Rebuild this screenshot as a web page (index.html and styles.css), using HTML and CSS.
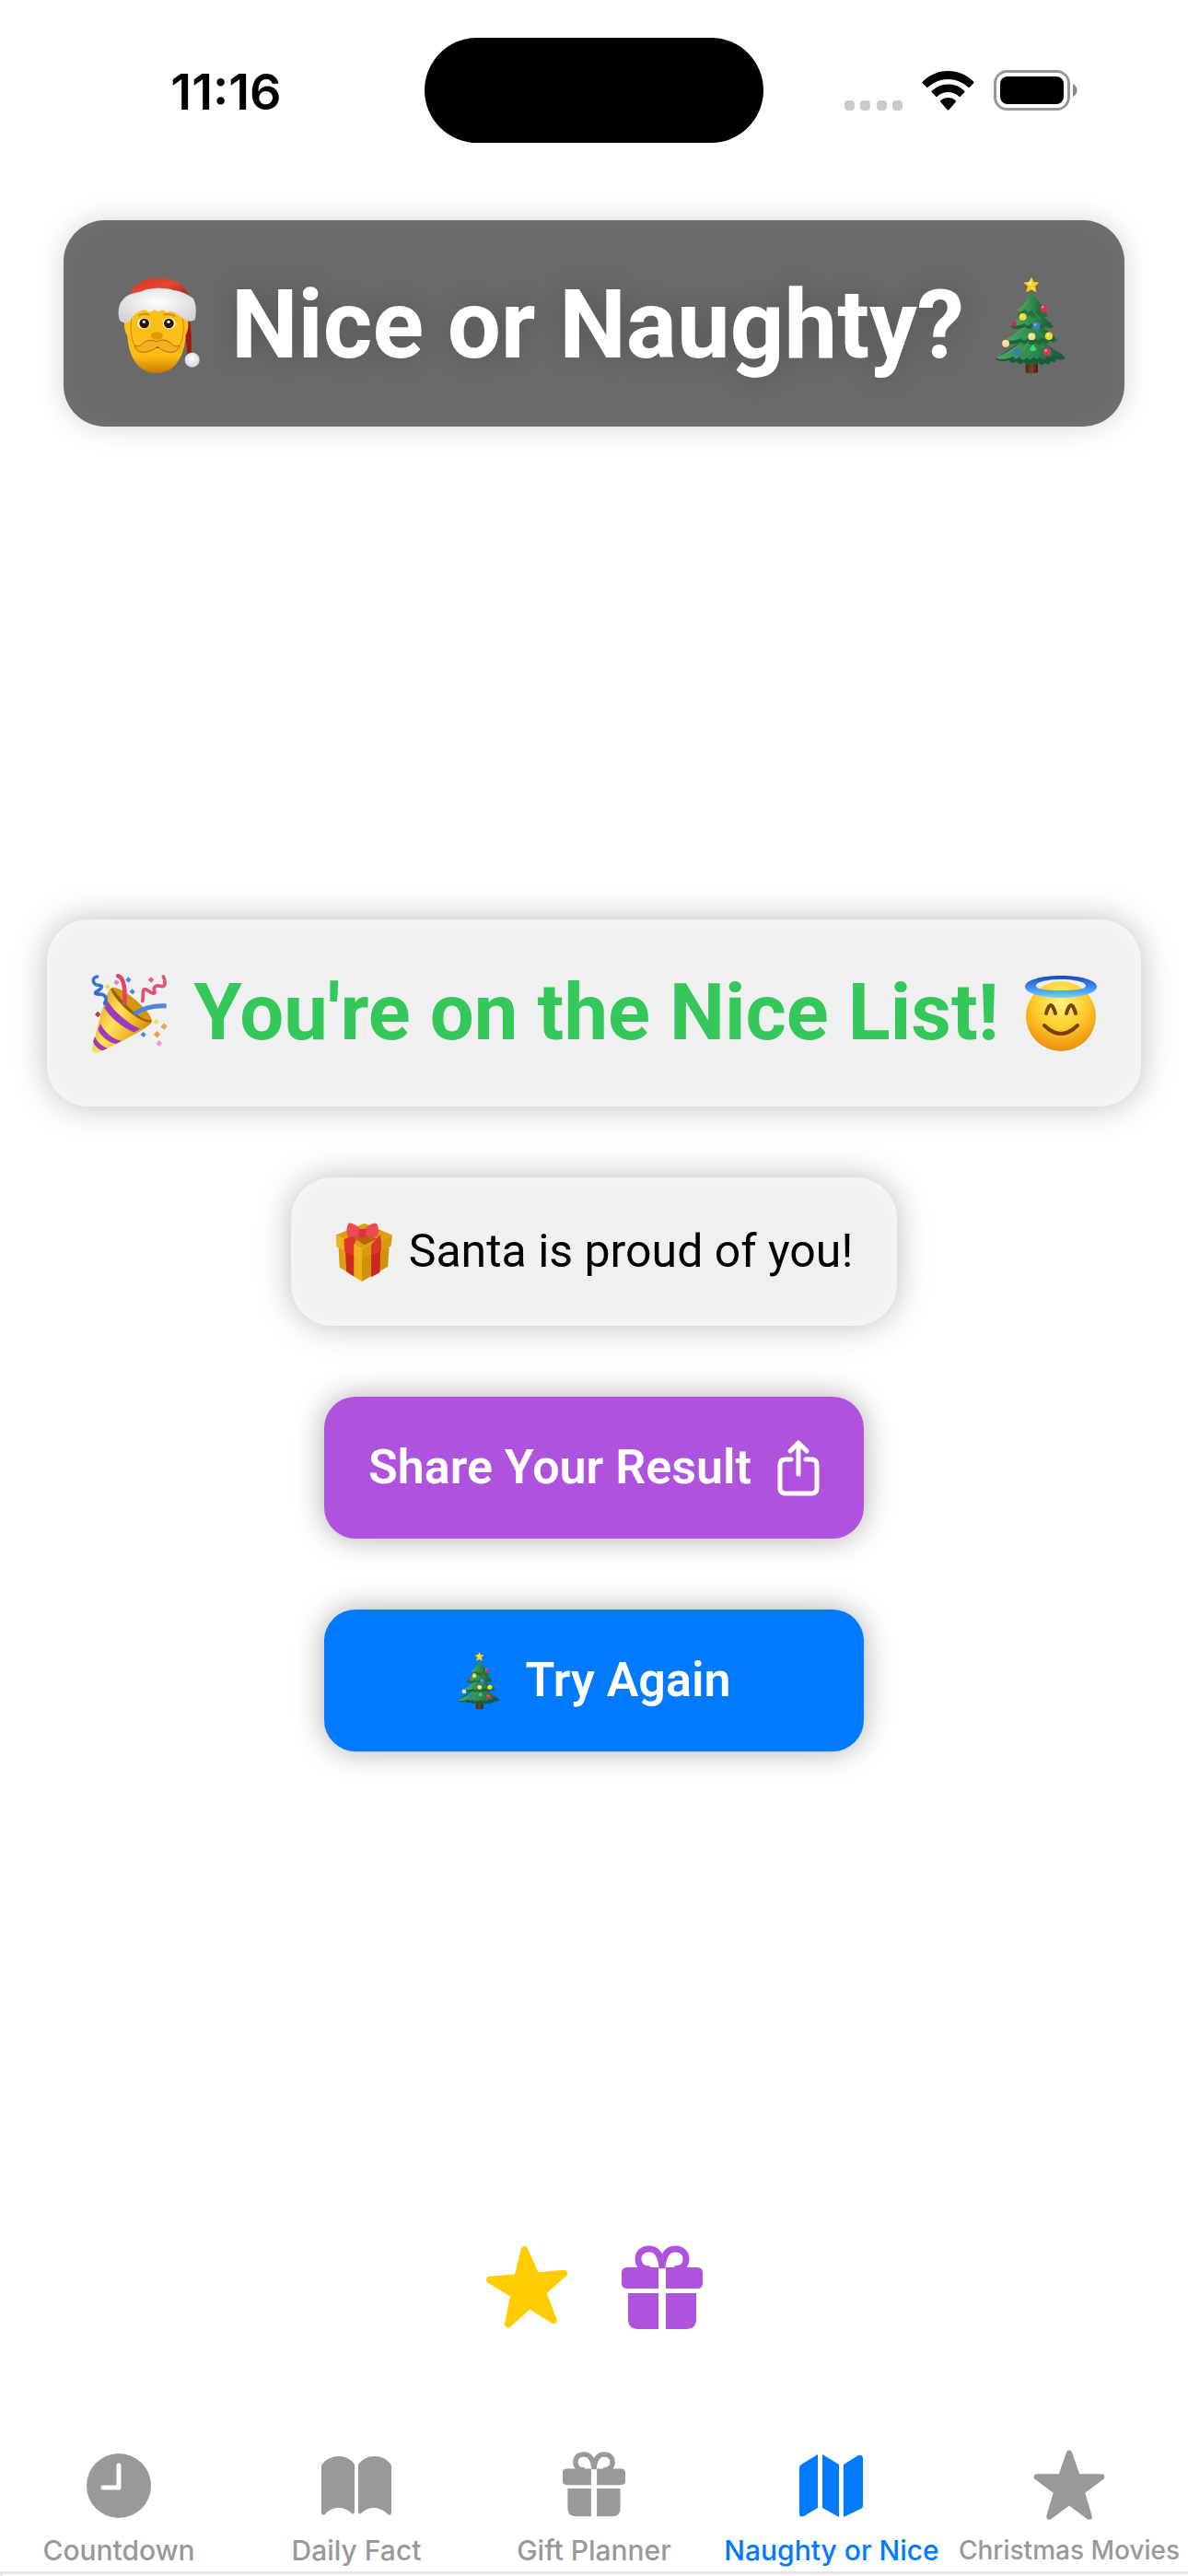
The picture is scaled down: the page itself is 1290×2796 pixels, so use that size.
FILE: index.html
```html
<!DOCTYPE html>
<html lang="en">
<head>
<meta charset="utf-8">
<meta name="viewport" content="width=device-width, initial-scale=1">
<title>Nice or Naughty?</title>
<link rel="stylesheet" href="styles.css">
</head>
<body>
<svg class="defs" aria-hidden="true">
  <defs>
    <linearGradient id="leaf" x1="0" x2="1"><stop offset="0" stop-color="#47a862"/><stop offset=".55" stop-color="#2f8a4c"/><stop offset="1" stop-color="#175a38"/></linearGradient>
    <linearGradient id="bark" x1="0" x2="1"><stop offset="0" stop-color="#4a2413"/><stop offset=".5" stop-color="#7a4324"/><stop offset="1" stop-color="#3f1d10"/></linearGradient>
    <linearGradient id="skin" x1="0" y1="0" x2="0" y2="1"><stop offset="0" stop-color="#fbc11f"/><stop offset=".75" stop-color="#fcbd13"/><stop offset="1" stop-color="#c97a02"/></linearGradient>
    <linearGradient id="hat" x1="0" y1="0" x2="1" y2="1"><stop offset="0" stop-color="#d8301f"/><stop offset=".5" stop-color="#e04a35"/><stop offset="1" stop-color="#a81b12"/></linearGradient>
    <radialGradient id="fur" cx=".5" cy=".4" r=".7"><stop offset="0" stop-color="#fff"/><stop offset="1" stop-color="#cfcfd4"/></radialGradient>
    <radialGradient id="face" cx=".5" cy=".3" r=".7"><stop offset="0" stop-color="#fff27c"/><stop offset=".5" stop-color="#fdd02e"/><stop offset="1" stop-color="#ee8d0c"/></radialGradient>
    <linearGradient id="halo" x1="0" y1="0" x2="0" y2="1"><stop offset="0" stop-color="#1746c0"/><stop offset=".5" stop-color="#3c88ec"/><stop offset="1" stop-color="#72d0ff"/></linearGradient>
    <linearGradient id="cone" x1="0" y1=".2" x2="1" y2=".8"><stop offset="0" stop-color="#d99a12"/><stop offset=".4" stop-color="#ffe15a"/><stop offset=".7" stop-color="#edb21f"/><stop offset="1" stop-color="#b97309"/></linearGradient>
    <linearGradient id="boxl" x1="0" x2="1"><stop offset="0" stop-color="#d99a0c"/><stop offset="1" stop-color="#edb51c"/></linearGradient>

    <symbol id="tree" viewBox="88 50 228 328">
      <path fill="url(#bark)" d="M186 325h40v42q-20 6-40 0z"/>
      <path fill="#1a5c39" d="M206 240c30 20 70 50 110 78-8 10-24 8-32 4 4 10-6 14-18 8 4 12-8 14-20 4 0 12-10 10-18 0-6 10-18 12-24 2-10 10-20 6-22-4-12 10-22 8-24-2-12 8-24 6-24-4-14 6-44 6-46-6 40-26 78-50 118-80z"/>
      <path fill="url(#leaf)" d="M206 235c26 24 60 52 102 74-8 10-22 6-32 0 0 10-10 10-22 4 2 14-12 12-22 2-2 12-14 10-20 0-6 12-16 12-22 2-8 12-20 10-22-2-12 10-22 8-22-2-16 12-54 14-56 4 50-20 84-50 116-82z"/>
      <path fill="#1d663e" d="M206 190c22 28 52 50 84 70-6 10-20 8-28 4 0 12-14 10-22 2-4 12-16 12-22 2-8 12-20 10-24 0-10 10-20 8-22-2-14 10-46 12-50 0 36-20 58-44 84-76z"/>
      <path fill="url(#leaf)" d="M206 180c22 28 46 48 76 70-6 8-18 6-26 0 0 12-12 10-20 2-4 12-14 12-20 2-8 12-18 10-22 0-8 12-20 10-22 0-14 10-44 12-48 2 36-18 58-44 82-76z"/>
      <path fill="#1d663e" d="M206 140c18 30 42 54 72 76-8 8-20 6-28 0-2 10-14 8-20 0-8 12-16 12-22 2-8 10-18 8-22-2-14 10-46 12-50 0 32-20 50-44 70-76z"/>
      <path fill="url(#leaf)" d="M206 130c18 28 36 54 64 78-8 6-18 4-26-2-2 10-12 8-18 0-6 12-16 12-22 0-8 12-18 8-22 0-12 8-38 12-42 2 28-18 48-46 66-78z"/>
      <path fill="#22713f" d="M206 112c14 22 32 46 54 70-8 6-16 4-24-2-4 10-12 8-18 0-6 12-14 10-18 0-12 8-36 10-40 0 20-16 34-40 46-68z"/>
      <path fill="url(#leaf)" d="M206 100c10 22 26 42 44 60-8 8-18 8-24 0-6 10-16 12-20 2-8 10-16 8-20-2-10 8-24 8-28 2 22-14 36-36 48-62z"/>
      <g stroke="#66bd7d" stroke-width="3" opacity=".5" fill="none" stroke-linecap="round"><path d="M196 130l-18 24M216 170l18 24M190 172l-22 24M180 222l-30 22M220 230l26 24M196 264l-18 28M160 280l-36 24M238 280l32 30"/></g>
      <path fill="#f9cd20" stroke="#f9cd20" stroke-width="4" stroke-linejoin="round" d="M205 59l6 14 15 1-11 11 4 17-14-8-15 8 5-17-12-11 15-1z"/>
      <path fill="#fff09a" d="M205 66v18l-14-8zM205 84l8 12-8-4z"/>
      <circle cx="246" cy="158" r="12" fill="#d92e50"/><circle cx="177" cy="185" r="12" fill="#f2dc35"/><circle cx="149" cy="207" r="8" fill="#c72e4a"/><circle cx="221" cy="215" r="12" fill="#3f7fce"/><circle cx="206" cy="249" r="12" fill="#efe285"/><circle cx="262" cy="248" r="13" fill="#efdb32"/><circle cx="121" cy="272" r="12" fill="#f2e08b"/><path fill="#44d475" d="M210 274l12 18q-12 10-24 0z"/><circle cx="158" cy="301" r="11" fill="#397ac6"/><circle cx="256" cy="299" r="13" fill="#d83554"/>
      <g fill="#fff" opacity=".45"><circle cx="242" cy="153" r="4"/><circle cx="173" cy="181" r="4"/><circle cx="217" cy="211" r="4"/><circle cx="202" cy="245" r="4"/><circle cx="258" cy="244" r="4"/><circle cx="117" cy="268" r="4"/><circle cx="252" cy="295" r="4"/></g>
    </symbol>

    <symbol id="gift" viewBox="0 0 88 91">
      <g fill="none" stroke="currentColor" stroke-width="7"><path d="M44 25C43 11 38 4 30 4 22 4 18 9 18 15c0 7 5 11 13 11M44 25C45 11 50 4 58 4c8 0 12 5 12 11 0 7-5 11-13 11"/></g>
      <path fill="currentColor" d="M6 24h34v23H6q-6 0-6-6V30q0-6 6-6zM48 24h34q6 0 6 6v11q0 6-6 6H48zM7 52h33v39H18Q7 91 7 80zM48 52h33v28q0 11-11 11H48z"/>
    </symbol>

    <symbol id="star" viewBox="0 0 100 100">
      <path fill="currentColor" stroke="currentColor" stroke-width="8" stroke-linejoin="round" d="M50 6l11 32h33L67 58l10 34-27-20-27 20 10-34L6 38h33z"/>
    </symbol>
  </defs>
</svg>

<header class="status">
  <time class="clock">11:16</time>
  <div class="island"></div>
  <div class="signals">
    <svg class="dots" viewBox="0 0 63 11"><g fill="#cbcbcb"><rect width="11" height="11" rx="4"/><rect x="17" width="11" height="11" rx="4"/><rect x="35" width="11" height="11" rx="4"/><rect x="52" width="11" height="11" rx="4"/></g></svg>
    <svg class="wifi" viewBox="0 0 55 43"><path d="M27.500 0C38 0 47.500 4 55 11.500q1 1 0 2L51 17.500q-1 1-2 0C43 12 35.500 9 27.500 9S12 12 6 17.500q-1 1-2 0L0 13.500q-1-1 0-2C7.500 4 17 0 27.500 0zM27.500 14.500c7 0 13 2.500 17.500 7q1 1 0 2l-4 4q-1 1-2 0c-3-3-7-4.500-11.500-4.500S19 24.500 16 27.500q-1 1-2 0l-4-4q-1-1 0-2c4.500-4.500 10.500-7 17.500-7zM27.500 29c3 0 6 1 8 3q1 1 0 2l-7 8q-1 1-2 0l-7-8q-1-1 0-2c2-2 5-3 8-3z"/></svg>
    <svg class="battery" viewBox="0 0 90 44"><rect x="1.500" y="1.500" width="80" height="41" rx="13" fill="none" stroke="#999" stroke-width="3"/><rect x="7" y="7" width="69" height="30" rx="8"/><path fill="#8c8c8c" d="M86 15c6 3 6 11 0 14z"/></svg>
  </div>
</header>

<main class="screen">
  <h1 class="title">
    <svg class="santa" viewBox="82 56 264 312" role="img" aria-label="Santa">
      <path fill="#a3170e" d="M290 150c28 24 30 90 28 160l-12 4c-4-60-10-100-30-130z"/>
      <path fill="url(#skin)" d="M104 190q4-40 34-50h130q34 8 36 52c8 8 4 40-4 52-4 70-36 124-96 124-58 0-90-52-94-122-10-14-14-44-6-56z"/>
      <path fill="none" stroke="#b17503" stroke-width="3" opacity=".7" d="M124 190q-8 40 6 84M290 190q8 40-6 84"/>
      <path fill="url(#hat)" d="M118 112c14-38 50-54 92-54 50 0 84 16 102 62z"/>
      <path fill="url(#fur)" d="M96 128c14-18 40-20 60-26 24-12 80-14 104-4 24 2 46 14 64 26 10 18 12 44 6 70-14 8-28 6-34-2-16-8-28-22-44-26l-14 4-12-8-14 6-14-6-16 8-14-8c-20 2-40 16-48 34-10 12-28 10-36-2-6-24-4-50 12-66z"/>
      <g fill="none" stroke="#d88d06" stroke-width="6" stroke-linecap="round"><path d="M148 180q16-8 32-2M230 178q16-6 34 4"/></g>
      <ellipse cx="163" cy="206" rx="21" ry="18" fill="#fff7df"/><ellipse cx="246" cy="206" rx="21" ry="18" fill="#fff7df"/>
      <circle cx="165" cy="206" r="16" fill="#2b1208"/><circle cx="245" cy="206" r="16" fill="#2b1208"/><circle cx="164" cy="201" r="5" fill="#fff"/><circle cx="244" cy="201" r="5" fill="#fff"/>
      <path fill="#e5950a" d="M188 240q18-12 36 0 6 18-18 20-24-2-18-20z"/>
      <path fill="#3f1605" d="M184 276q22-10 46 0-20 20-46 0z"/>
      <path fill="#f5b021" stroke="#ad6b05" stroke-width="3" d="M206 266c-20-10-38-4-48 8-8 8-16 8-24 2 2 20 20 28 42 22 16-4 26-12 32-16 8 6 18 14 34 17 20 4 36-4 38-22-10 6-18 4-26-4-12-12-30-18-48-7z"/>
      <circle cx="321" cy="325" r="24" fill="url(#fur)"/>
    </svg>
    <span>Nice or Naughty?</span>
    <svg class="tree-large" role="img" aria-label="Christmas tree"><use href="#tree"/></svg>
  </h1>

  <section class="result">
    <h2 class="verdict">
      <svg class="popper" viewBox="22 24 250 262" role="img" aria-label="Party popper">
        <path fill="#9a6207" d="M84 78c14-26 142 80 136 106-30 24-140-70-136-106z"/>
        <path fill="#d8960f" d="M90 72c30-8 130 78 128 104-20 14-80-40-128-104z"/>
        <path fill="none" stroke="#e3435f" stroke-width="14" stroke-linecap="round" d="M110 34c20 6 24 40 21 88"/>
        <path fill="none" stroke="#4a87dc" stroke-width="15" d="M162 158c28-18 60-28 106-26"/>
        <path fill="url(#cone)" d="M86 72c0 28 84 116 134 114-6 14-110 70-174 98-10 6-22-4-20-16 8-30 42-176 60-196z"/>
        <path fill="#9c3bbd" d="M75 114c20 34 70 78 107 92l-20 12c-38-14-84-54-96-80zM52 190c12 26 42 54 70 56l-18 10c-26-4-52-28-60-46zM34 232c6 16 24 34 42 38l-16 8c-16-4-28-18-32-30z"/>
        <g fill="none" stroke-width="11" stroke-linecap="round"><path stroke="#3374d5" d="M42 36c-22 4-14 28 6 28 18 2 4 14-10 22-10 10 14 6 24 10 14 8 8 18 4 28"/><path stroke="#e55274" d="M258 36c8 14 8 34-6 32-14-4-26-4-24 12 8 20-12 8-26-2-16-6-8 20-12 38"/></g>
        <g stroke-width="3"><path fill="#f0dc45" d="M76 60l9 9-9 9-9-9z"/><path fill="#e783b5" d="M104 46l10 9-8 10-11-9z"/><path fill="#458be0" d="M143 37l10 9-8 10-11-9zM156 76l10 9-8 10-11-9zM192 216l10 9-8 10-11-9z"/><path fill="#e35c80" d="M217 37l10 9-8 10-11-9z"/><path fill="#c42f50" d="M43 150l10 9-8 10-11-9z"/><path fill="#f3df54" d="M233 174l10 9-8 10-11-9z"/><path fill="#e9a34d" d="M260 188l11 10-9 12-13-10zM237 214l11 10-9 12-13-10z"/><path fill="#ef9ac9" d="M244 244l10 10-8 11-12-10z"/></g>
      </svg>
      <span>You're on the Nice List!</span>
      <svg class="angel" viewBox="0 0 78 82" role="img" aria-label="Smiling face with halo">
        <circle cx="39" cy="44" r="38" fill="url(#face)"/>
        <path fill="url(#halo)" fill-rule="evenodd" d="M39 0c22 0 39 5 39 12s-17 12-39 12S0 19 0 12 17 0 39 0zm0 4C24 4 12 7 12 11s12 5 27 5 27-1 27-5S54 4 39 4z"/>
        <g fill="none" stroke="#764206" stroke-width="4" stroke-linecap="round"><path d="M23 41q5-18 10 0M45 41q5-18 10 0M21 54q18 18 36 0"/></g>
      </svg>
    </h2>
    <p class="message">
      <svg class="present" viewBox="28 30 184 190" role="img" aria-label="Wrapped present">
        <path fill="url(#boxl)" d="M38 100l76 36v84l-72-46z"/><path fill="#cf9309" d="M114 136l88-38-4 74-84 48z"/>
        <path fill="#c9271f" d="M60 108l28 14v82l-24-16zM144 122l30-14-2 82-28 16z"/>
        <path fill="#dca012" d="M30 70l92-38 90 38-98 44z"/><path fill="#bd6213" d="M84 76l30-18 50 24-42 20z"/>
        <path fill="#edb31a" d="M30 70l84 44v34l-82-40z"/><path fill="#d79b0c" d="M212 70l-98 44v34l94-42z"/>
        <path fill="#df342b" d="M56 84l28-12 12 14-8 16v34l-30-14zM144 101l28-32 4 18v34l-32 14z"/>
        <path fill="#ed4a53" d="M116 56c-16-16-34-28-44-24-8 12-10 30-2 44 20 0 34-6 46-10 14 8 30 12 48 8 6-12 4-30-2-40-14-6-30 8-46 22z"/>
        <rect x="104" y="50" width="24" height="28" rx="8" fill="#d8353e"/>
      </svg>
      <span>Santa is proud of you!</span>
    </p>
    <div class="actions">
      <button class="action share" type="button">
        <span>Share Your Result</span>
        <svg class="share-icon" viewBox="0 0 46 60" fill="none" stroke="#fff" stroke-width="5" stroke-linecap="round" stroke-linejoin="round"><path d="M15 21H9q-6 0-6 6v25q0 6 6 6h28q6 0 6-6V27q0-6-6-6h-6M23 37V3M14 12l9-9 9 9"/></svg>
      </button>
      <button class="action retry" type="button">
        <svg class="tree-small" aria-hidden="true"><use href="#tree"/></svg>
        <span>Try Again</span>
      </button>
    </div>
  </section>

  <div class="decor">
    <svg class="decor-star" viewBox="0 0 100 100"><use href="#star"/></svg>
    <svg class="decor-gift"><use href="#gift"/></svg>
  </div>
</main>

<nav class="tabs">
  <a class="tab" href="#countdown">
    <svg class="tab-icon" viewBox="0 0 80 80"><circle cx="40" cy="40" r="35" fill="currentColor"/><path d="M40 18v24H23" fill="none" stroke="#fff" stroke-width="5" stroke-linecap="round" stroke-linejoin="round"/></svg>
    Countdown
  </a>
  <a class="tab" href="#fact">
    <svg class="tab-icon" viewBox="0 0 80 80"><path fill="currentColor" d="M2 18C11 5 30 5 38 17v52q-1 3-3 1c-9-8-21-8-29 1q-4 2-4-2zM42 17c9-12 28-12 36 1v51q0 4-4 2c-9-9-20-9-29-1q-2 2-3-1z"/></svg>
    Daily Fact
  </a>
  <a class="tab" href="#gifts">
    <svg class="tab-icon gift-tab"><use href="#gift"/></svg>
    Gift Planner
  </a>
  <a class="tab active" href="#naughty-or-nice" aria-current="page">
    <svg class="tab-icon" viewBox="0 0 80 80"><path fill="currentColor" d="M5 21q0-3 2-4L25 6v58L10 73q-5 2-5-3zM30 6l18 11v57L30 64zM53 17L69 7q5-1 5 4v50q0 3-2 4L53 74z"/></svg>
    Naughty or Nice
  </a>
  <a class="tab compact" href="#movies">
    <svg class="tab-icon" viewBox="0 0 100 100"><use href="#star"/></svg>
    Christmas Movies
  </a>
</nav>
<div class="sheet-edge"></div>
</body>
</html>
```

FILE: styles.css
```css
* {
  box-sizing: border-box;
}

body {
  margin: 0;
  min-height: 100vh;
  display: flex;
  flex-direction: column;
  background: #fff;
  color: #000;
  font-family: Roboto, "Liberation Sans", sans-serif;
}

svg {
  flex: none;
  overflow: visible;
}

.defs {
  position: absolute;
  width: 0;
  height: 0;
}

.status {
  display: grid;
  grid-template-columns: 1fr 368px 1fr;
  align-items: center;
  padding-top: 41px;
}

.clock {
  justify-self: center;
  padding: 4px 0 0 30px;
  font-family: Inter, "Liberation Sans", sans-serif;
  font-size: 54px;
  font-weight: 600;
  line-height: 64px;
}

.island {
  height: 114px;
  border-radius: 57px;
  background: #000;
}

.signals {
  display: flex;
  align-items: flex-end;
  justify-content: center;
  gap: 22px;
  padding-right: 34px;
}

.dots {
  width: 63px;
  height: 11px;
}

.wifi {
  width: 55px;
  height: 43px;
}

.battery {
  width: 90px;
  height: 44px;
}

.screen {
  flex: 1;
  display: flex;
  flex-direction: column;
  align-items: center;
  justify-content: space-between;
  padding: 84px 48px 130px;
}

.title,
.verdict,
.message {
  display: flex;
  align-items: center;
  justify-content: center;
  margin: 0;
  padding: 48px;
  border-radius: 45px;
  white-space: nowrap;
}

.title {
  gap: 34px;
  padding: 50px 64px 46px 60px;
  background: #6a6a6a;
  box-shadow: 0 0 30px rgba(0, 0, 0, 0.16), inset 0 0 40px rgba(255, 255, 255, 0.06);
  color: #fff;
  font-size: 103px;
  font-weight: 700;
  line-height: 128px;
  text-shadow: 0 0 30px rgba(0, 0, 0, 0.2);
}

.santa {
  width: 88px;
  height: 104px;
}

.tree-large {
  width: 76px;
  height: 109px;
}

.result {
  display: flex;
  flex-direction: column;
  align-items: center;
  gap: 77px;
}

.verdict,
.message {
  background: #f0f0f0;
  box-shadow: 0 0 36px rgba(0, 0, 0, 0.26), inset 0 0 36px rgba(255, 255, 255, 0.6);
}

.verdict {
  gap: 28px;
  color: #34c759;
  font-size: 85px;
  font-weight: 700;
  line-height: 107px;
}

.popper {
  width: 83px;
  height: 87px;
}

.angel {
  width: 78px;
  height: 82px;
}

.message {
  gap: 18px;
  font-size: 50px;
  font-weight: 400;
  line-height: 65px;
}

.present {
  width: 62px;
  height: 64px;
}

.actions {
  display: grid;
  gap: 77px;
}

.action {
  display: flex;
  align-items: center;
  justify-content: center;
  gap: 28px;
  padding: 44px 48px;
  border: 0;
  border-radius: 34px;
  box-shadow: 0 0 32px rgba(0, 0, 0, 0.32);
  color: #fff;
  font-family: inherit;
  font-size: 52px;
  font-weight: 600;
  line-height: 66px;
  white-space: nowrap;
}

.share {
  background: #af52de;
}

.retry {
  background: #007aff;
}

.share-icon {
  width: 46px;
  height: 60px;
}

.tree-small {
  width: 46px;
  height: 65px;
}

.decor {
  display: flex;
  align-items: center;
  gap: 56px;
}

.decor-star {
  width: 92px;
  height: 92px;
  color: #ffcc00;
  transform: rotate(-5deg);
}

.decor-gift {
  width: 88px;
  height: 91px;
  color: #af52de;
}

.tabs {
  display: grid;
  grid-template-columns: repeat(5, 1fr);
  padding-bottom: 5px;
}

.tab {
  display: flex;
  flex-direction: column;
  align-items: center;
  gap: 12px;
  color: #999;
  font-family: Inter, "Liberation Sans", sans-serif;
  font-size: 30px;
  font-weight: 500;
  line-height: 36px;
  text-decoration: none;
  white-space: nowrap;
}

.compact {
  font-size: 28px;
}

.tab-icon {
  width: 80px;
  height: 80px;
}

.gift-tab {
  padding: 1px 6px 5px;
}

.active {
  color: #007aff;
}

.sheet-edge {
  height: 5px;
  border-top: 3px solid #e5e5ea;
  border-left: 3px solid #e5e5ea;
}
```
